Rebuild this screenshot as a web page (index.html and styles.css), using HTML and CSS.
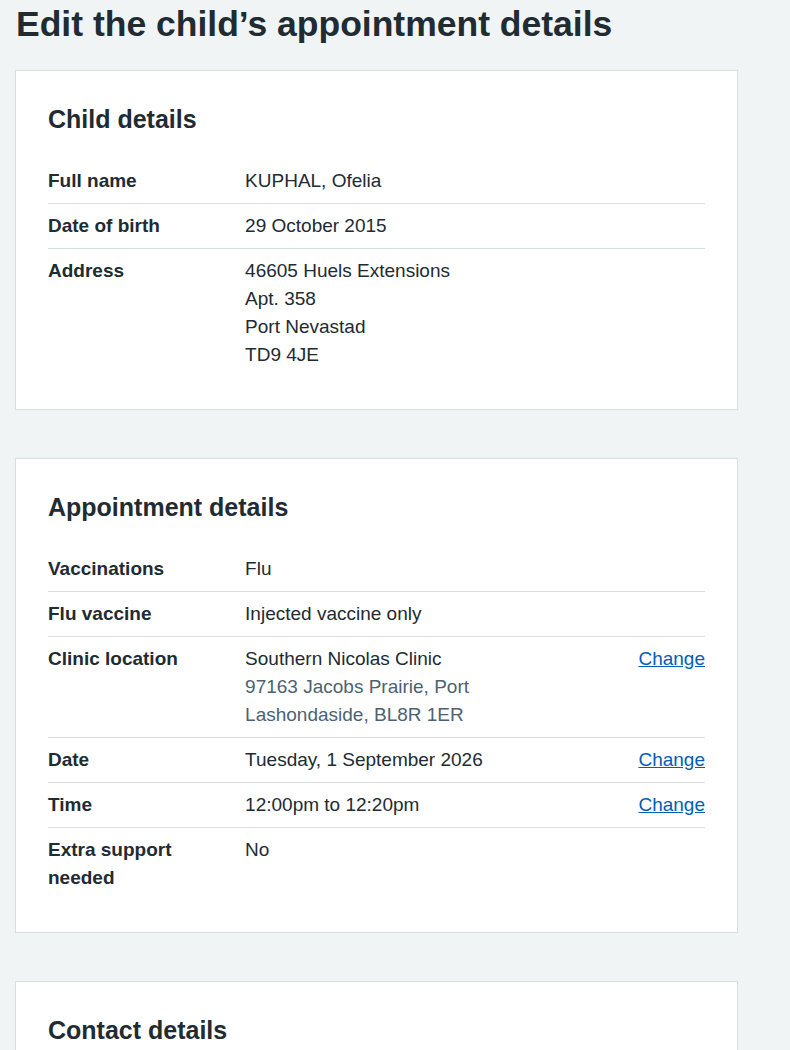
FILE: index.html
```html
<!DOCTYPE html>
<html lang="en">
<head>
<meta charset="utf-8" />
<meta name="viewport" content="width=device-width, initial-scale=1" />
<title>Edit the child’s appointment details</title>
<link rel="stylesheet" href="styles.css">
</head>
<body>

<main class="page">
	<h1 class="pageTitle">Edit the child’s appointment details</h1>

	<section class="card">
		<h2 class="cardHeading">Child details</h2>
		<dl class="summaryList">
			<div class="summaryRow">
				<dt class="summaryKey">Full name</dt>
				<dd class="summaryValue">KUPHAL, Ofelia</dd>
				<dd class="summaryAction"></dd>
			</div>
			<div class="summaryRow">
				<dt class="summaryKey">Date of birth</dt>
				<dd class="summaryValue">29 October 2015</dd>
				<dd class="summaryAction"></dd>
			</div>
			<div class="summaryRow">
				<dt class="summaryKey">Address</dt>
				<dd class="summaryValue">46605 Huels Extensions<br>Apt. 358<br>Port Nevastad<br>TD9 4JE</dd>
				<dd class="summaryAction"></dd>
			</div>
		</dl>
	</section>

	<section class="card">
		<h2 class="cardHeading">Appointment details</h2>
		<dl class="summaryList">
			<div class="summaryRow">
				<dt class="summaryKey">Vaccinations</dt>
				<dd class="summaryValue">Flu</dd>
				<dd class="summaryAction"></dd>
			</div>
			<div class="summaryRow">
				<dt class="summaryKey">Flu vaccine</dt>
				<dd class="summaryValue">Injected vaccine only</dd>
				<dd class="summaryAction"></dd>
			</div>
			<div class="summaryRow">
				<dt class="summaryKey">Clinic location</dt>
				<dd class="summaryValue">
					Southern Nicolas Clinic
					<span class="secondaryText">97163 Jacobs Prairie, Port Lashondaside, BL8R 1ER</span>
				</dd>
				<dd class="summaryAction"><a href="#">Change</a></dd>
			</div>
			<div class="summaryRow">
				<dt class="summaryKey">Date</dt>
				<dd class="summaryValue">Tuesday, 1 September 2026</dd>
				<dd class="summaryAction"><a href="#">Change</a></dd>
			</div>
			<div class="summaryRow">
				<dt class="summaryKey">Time</dt>
				<dd class="summaryValue">12:00pm to 12:20pm</dd>
				<dd class="summaryAction"><a href="#">Change</a></dd>
			</div>
			<div class="summaryRow">
				<dt class="summaryKey">Extra support needed</dt>
				<dd class="summaryValue">No</dd>
				<dd class="summaryAction"></dd>
			</div>
		</dl>
	</section>

	<section class="card">
		<h2 class="cardHeading">Contact details</h2>
	</section>
</main>

</body>
</html>
```

FILE: styles.css
```css
html, body {
	margin: 0;
	padding: 0;
	background-color: #f0f4f5;
	color: #212b32;
	font-family: "Liberation Sans", Arial, sans-serif;
	font-size: 19px;
	line-height: 28px;
}

.page {
	width: 723px;
	padding: 3px 0 0 15px;
}

.pageTitle {
	margin: 0 0 25px 1px;
	font-size: 35.5px;
	line-height: 42px;
	font-weight: bold;
}

.card {
	background-color: #fff;
	border: 1px solid #d8dde0;
	padding: 32px;
	margin-bottom: 48px;
}

.cardHeading {
	margin: 0 0 24px 0;
	font-size: 25px;
	line-height: 32px;
	font-weight: bold;
}

.summaryList {
	margin: 0;
}

.summaryRow {
	display: grid;
	grid-template-columns: 30% 50% 20%;
	border-bottom: 1px solid #d8dde0;
}

.summaryRow:last-child {
	border-bottom: none;
}

.summaryKey,
.summaryValue,
.summaryAction {
	margin: 0;
	padding: 8px 24px 8px 0;
}

.summaryKey {
	font-weight: bold;
}

.summaryAction {
	padding-right: 0;
	text-align: right;
}

.summaryAction a {
	color: #005eb8;
	text-decoration: underline;
}

.secondaryText {
	display: block;
	color: #4c6272;
}
```
